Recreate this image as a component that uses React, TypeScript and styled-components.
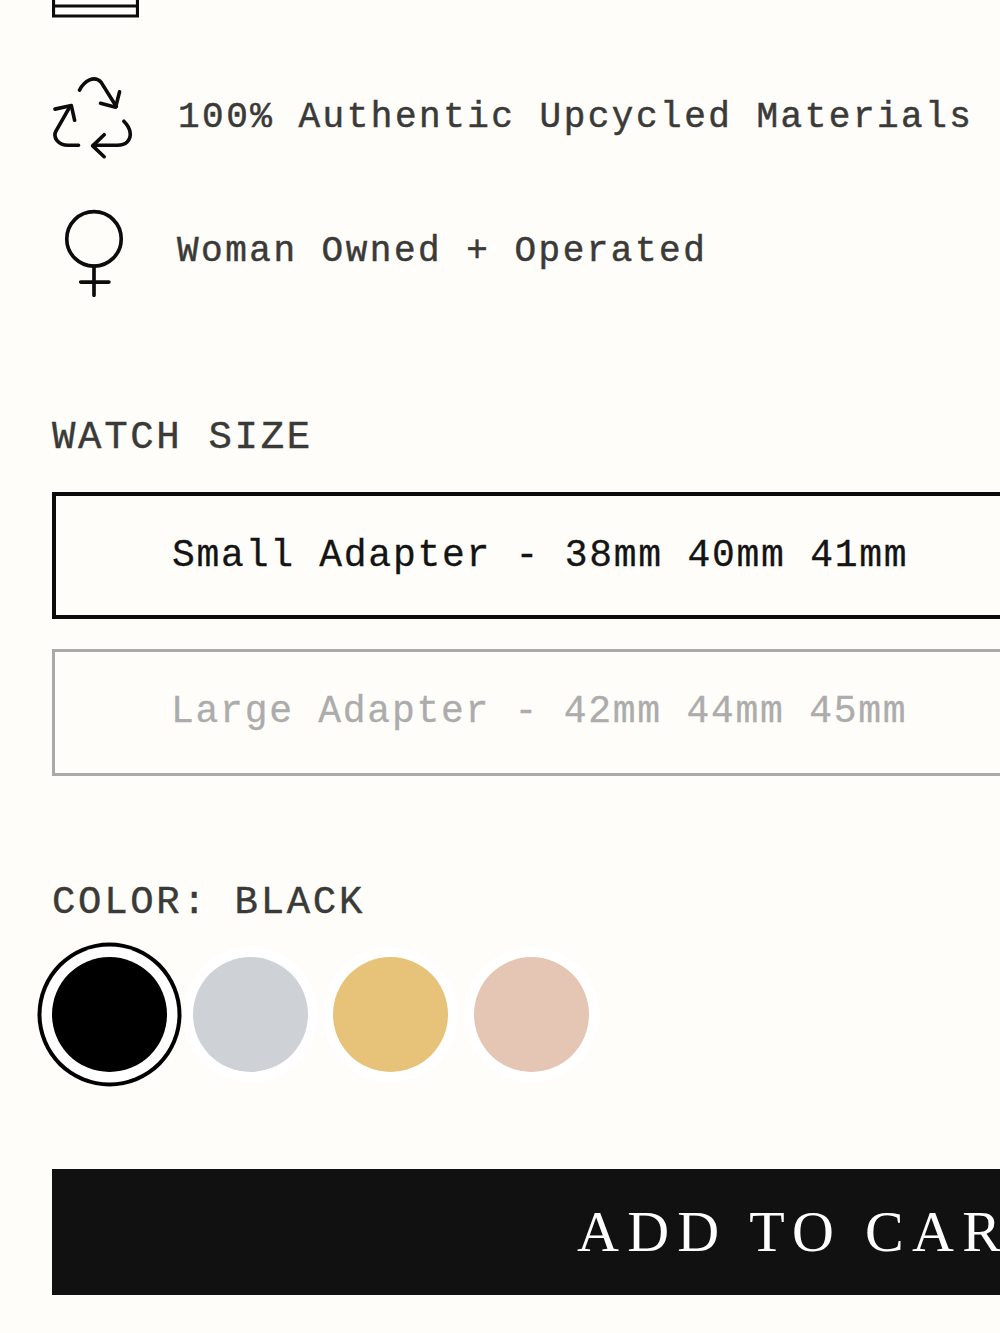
import React from "react";
import styled, { createGlobalStyle } from "styled-components";

const Global = createGlobalStyle`
  html, body { margin: 0; padding: 0; background: #fffdf9; }
  body { width: 1000px; height: 1333px; overflow: hidden; }
`;

const Page = styled.main`
  width: 1000px;
  height: 1333px;
  overflow: hidden;
  padding-left: 52px;
  box-sizing: border-box;
  font-family: "Liberation Mono", "Courier New", monospace;
  color: #3a3a38;
`;

const TopIcon = styled.svg`
  display: block;
  width: 87px;
  height: 18px;
`;

const Feature = styled.div<{ $top: number; $gap: number; $iconLeft: number }>`
  display: flex;
  align-items: center;
  margin-top: ${(p) => p.$top}px;
  padding-left: ${(p) => p.$iconLeft}px;
  gap: ${(p) => p.$gap}px;
  white-space: nowrap;
`;

const FeatureText = styled.span<{ $lift?: number }>`
  font-size: 36px;
  letter-spacing: 2.5px;
  margin-bottom: ${(p) => p.$lift ?? 0}px;
  -webkit-text-stroke: 0.5px #3a3a38;
`;

const SectionLabel = styled.div<{ $top: number }>`
  margin-top: ${(p) => p.$top}px;
  font-size: 39px;
  line-height: 40px;
  letter-spacing: 2.68px;
  white-space: nowrap;
  -webkit-text-stroke: 0.4px #3a3a38;
`;

const SizeOption = styled.div<{ $muted?: boolean; $top: number; $lift?: number }>`
  width: 1100px;
  height: 127px;
  margin-top: ${(p) => p.$top}px;
  box-sizing: border-box;
  display: flex;
  align-items: center;
  padding-left: 116px;
  padding-bottom: ${(p) => p.$lift ?? 0}px;
  border: ${(p) => (p.$muted ? "3.5px solid #a9a9a9" : "4px solid #0c0c0c")};
  color: ${(p) => (p.$muted ? "#acacac" : "#141414")};
  font-size: 38px;
  letter-spacing: 1.74px;
  white-space: nowrap;
  -webkit-text-stroke: 0.3px currentColor;
`;

const Swatches = styled.div`
  display: flex;
  gap: 25.5px;
  margin-top: 34px;
`;

const Swatch = styled.div<{ $color: string; $selected?: boolean }>`
  width: 115px;
  height: 115px;
  border-radius: 50%;
  background: ${(p) => p.$color};
  box-shadow: ${(p) =>
    p.$selected
      ? "0 0 0 10.5px #fff, 0 0 0 14.5px #000"
      : "0 0 0 10px #ffffff"};
`;

const AddToCart = styled.div`
  width: 1200px;
  height: 126px;
  margin-top: 97px;
  padding-bottom: 2px;
  box-sizing: border-box;
  background: #111111;
  color: #fff;
  display: flex;
  align-items: center;
  padding-left: 525px;
  font-family: "Liberation Serif", "Times New Roman", serif;
  font-size: 58px;
  letter-spacing: 8.3px;
  white-space: nowrap;
`;

const LineIcon = styled.svg`
  display: block;
  flex: none;
  fill: none;
  stroke: #0c0c0c;
  stroke-linecap: round;
  stroke-linejoin: round;
`;

const App: React.FC = () => (
  <Page>
    <Global />
    <TopIcon viewBox="0 0 87 18" aria-hidden="true">
      <path d="M1.5 0V16H85.5V0M1.5 6H85.5" fill="none" stroke="#0c0c0c" strokeWidth="3.2" />
    </TopIcon>
    <Feature $top={57} $gap={44} $iconLeft={0}>
      <LineIcon width="82" height="84" viewBox="66 224 250 256" strokeWidth="11">
        <path d="M150 270C165 240 195 225 215 245L262 320" />
        <path d="M272 275L260 322L214 310" />
        <path d="M147 438H115C85 438 68 415 78 395L118 325" />
        <path d="M75 328L125 317L135 362" />
        <path d="M285 365C305 385 312 410 295 428C285 438 275 438 265 438H192" />
        <path d="M225 406L190 440L225 473" />
      </LineIcon>
      <FeatureText>100% Authentic Upcycled Materials</FeatureText>
    </Feature>
    <Feature $top={50} $gap={53} $iconLeft={12}>
      <LineIcon width="60" height="88" viewBox="100 625 180 265" strokeWidth="11">
        <circle cx="190" cy="715" r="82" />
        <path d="M190 797V885M150 845H235" />
      </LineIcon>
      <FeatureText $lift={3}>Woman Owned + Operated</FeatureText>
    </Feature>
    <SectionLabel $top={121}>WATCH SIZE</SectionLabel>
    <SizeOption $top={34}>Small Adapter - 38mm 40mm 41mm</SizeOption>
    <SizeOption $muted $top={30} $lift={2}>Large Adapter - 42mm 44mm 45mm</SizeOption>
    <SectionLabel $top={107}>COLOR: BLACK</SectionLabel>
    <Swatches>
      <Swatch $color="#000000" $selected />
      <Swatch $color="#ced1d6" />
      <Swatch $color="#e6c378" />
      <Swatch $color="#e5c5b4" />
    </Swatches>
    <AddToCart>ADD TO CART</AddToCart>
  </Page>
);

export default App;
